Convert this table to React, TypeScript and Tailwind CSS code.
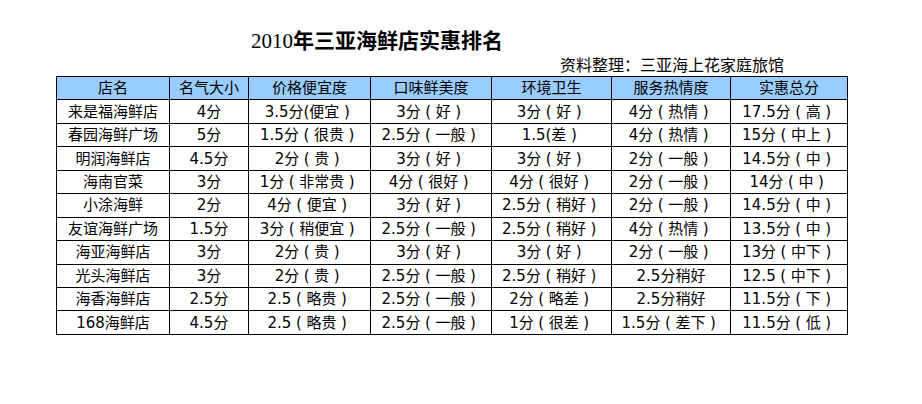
const headers = ['店名', '名气大小', '价格便宜度', '口味鲜美度', '环境卫生', '服务热情度', '实惠总分'];

const rows: string[][] = [
  ['来是福海鲜店', '4分', '3.5分(便宜）', '3分（好）', '3分（好）', '4分（热情）', '17.5分（高）'],
  ['春园海鲜广场', '5分', '1.5分（很贵）', '2.5分（一般）', '1.5(差）', '4分（热情）', '15分（中上）'],
  ['明润海鲜店', '4.5分', '2分（贵）', '3分（好）', '3分（好）', '2分（一般）', '14.5分（中）'],
  ['海南官菜', '3分', '1分（非常贵）', '4分（很好）', '4分（很好）', '2分（一般）', '14分（中）'],
  ['小涂海鲜', '2分', '4分（便宜）', '3分（好）', '2.5分（稍好）', '2分（一般）', '14.5分（中）'],
  ['友谊海鲜广场', '1.5分', '3分（稍便宜）', '2.5分（一般）', '2.5分（稍好）', '4分（热情）', '13.5分（中）'],
  ['海亚海鲜店', '3分', '2分（贵）', '3分（好）', '3分（好）', '2分（一般）', '13分（中下）'],
  ['光头海鲜店', '3分', '2分（贵）', '2.5分（一般）', '2.5分（稍好）', '2.5分稍好', '12.5（中下）'],
  ['海香海鲜店', '2.5分', '2.5（略贵）', '2.5分（一般）', '2分（略差）', '2.5分稍好', '11.5分（下）'],
  ['168海鲜店', '4.5分', '2.5（略贵）', '2.5分（一般）', '1分（很差）', '1.5分（差下）', '11.5分（低）'],
];

const widths = [113, 79, 122, 121, 120, 119, 117];

// full-width brackets in the source sheet sit centred in their box
function Cell({ text }: { text: string }) {
  const parts = text.split(/([（）])/).filter(Boolean);
  return (
    <>
      {parts.map((p, i) =>
        p === '（' || p === '）' ? (
          <span key={i} className="inline-block w-[1em] text-center">
            {p === '（' ? '(' : ')'}
          </span>
        ) : (
          <span key={i}>{p}</span>
        ),
      )}
    </>
  );
}

export default function App() {
  return (
    <div className="w-[922px] h-[404px] bg-white text-black overflow-hidden">
      <div className="ml-[56px] pt-[30px] w-[791px]">
        <h1 className="pl-[195px] text-[21px] leading-[22px] font-semibold font-['Liberation_Serif','Noto_Sans_CJK_SC',serif]">
          <span className="font-normal">2010</span>年三亚海鲜店实惠排名
        </h1>
        <p className="mt-[4px] pl-[504px] text-[16px] leading-[16px] font-['Noto_Sans_CJK_SC',sans-serif]">
          资料整理：三亚海上花家庭旅馆
        </p>
        <table className="mt-[4px] w-[791px] table-fixed border-collapse text-[15px] font-['DejaVu_Sans','Noto_Sans_CJK_SC',sans-serif]">
          <colgroup>
            {widths.map((w, i) => (
              <col key={i} style={{ width: w }} />
            ))}
          </colgroup>
          <thead>
            <tr className="h-[23.45px] bg-[#99ccff]">
              {headers.map((h) => (
                <th key={h} className="border border-black p-0 font-normal leading-[20px] text-center">
                  {h}
                </th>
              ))}
            </tr>
          </thead>
          <tbody>
            {rows.map((r) => (
              <tr key={r[0]} className="h-[23.45px]">
                {r.map((c, i) => (
                  <td key={i} className="border border-black p-0 leading-[20px] text-center whitespace-nowrap">
                    <Cell text={c} />
                  </td>
                ))}
              </tr>
            ))}
          </tbody>
        </table>
      </div>
    </div>
  );
}
